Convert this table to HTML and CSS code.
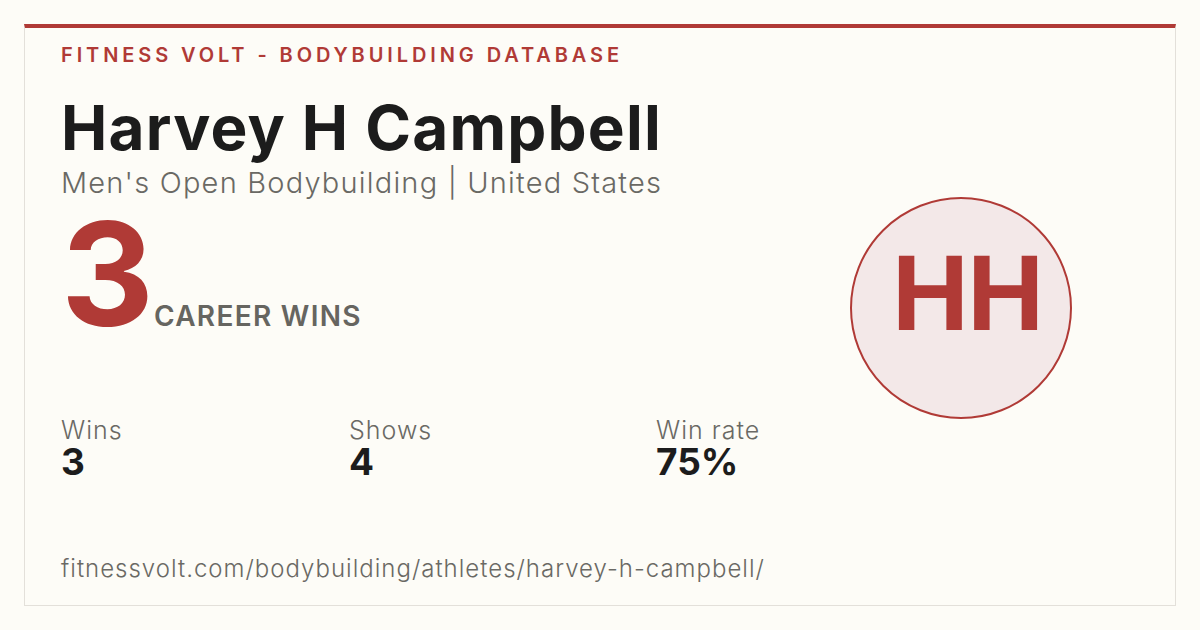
FILE: index.html
```html
<!DOCTYPE html>
<html lang="en">
<head>
<meta charset="utf-8">
<link rel="stylesheet" href="styles.css">
</head>
<body>
<div class="card">
  <div class="main">
    <div class="eyebrow">FITNESS VOLT - BODYBUILDING DATABASE</div>
    <h1 class="name">Harvey H Campbell</h1>
    <div class="sub">Men's Open Bodybuilding | United States</div>
    <div class="hero">
      <span class="hero-num">3</span>
      <span class="hero-label">CAREER WINS</span>
    </div>
    <div class="stats">
      <div class="stat"><div class="stat-label">Wins</div><div class="stat-value">3</div></div>
      <div class="stat"><div class="stat-label">Shows</div><div class="stat-value">4</div></div>
      <div class="stat"><div class="stat-label">Win rate</div><div class="stat-value">75%</div></div>
    </div>
    <div class="url">fitnessvolt.com/bodybuilding/athletes/harvey-h-campbell/</div>
  </div>
  <div class="aside">
    <div class="avatar">HH</div>
  </div>
</div>
</body>
</html>
```

FILE: styles.css
```css
html, body {
  margin: 0;
  padding: 0;
  background: #fdfcf7;
}
body {
  width: 1200px;
  height: 630px;
  overflow: hidden;
  font-family: Inter, "Liberation Sans", sans-serif;
}
.card {
  box-sizing: border-box;
  margin: 24px;
  width: 1152px;
  height: 582px;
  border: 1px solid #e3e0da;
  border-top: 4px solid #b03a36;
  background: #fdfcf7;
  padding: 0 36px;
  display: flex;
}
.main {
  flex: 1;
  display: flex;
  flex-direction: column;
}
.eyebrow {
  margin-top: 13px;
  font-size: 20px;
  line-height: 28px;
  font-weight: 600;
  letter-spacing: 3.9px;
  color: #b03a36;
}
.name {
  margin: 25px 0 0;
  font-size: 62px;
  line-height: 68px;
  font-weight: 700;
  color: #1c1c1c;
  letter-spacing: 1.2px;
}
.sub {
  margin-top: 4px;
  font-size: 29px;
  line-height: 34px;
  font-weight: 300;
  color: #6a6964;
  letter-spacing: 1.2px;
}
.hero {
  display: flex;
  align-items: baseline;
  gap: 0;
  margin-top: 8px;
}
.hero-num {
  font-size: 144px;
  line-height: 132px;
  font-weight: 700;
  color: #b03a36;
}
.hero-label {
  font-size: 28px;
  font-weight: 600;
  color: #666560;
  letter-spacing: 1.3px;
}
.stats {
  display: grid;
  grid-template-columns: 288px 307px auto;
  margin-top: 77px;
}
.stat-label {
  font-size: 25px;
  line-height: 26px;
  font-weight: 300;
  color: #6a6964;
  letter-spacing: 1px;
}
.stat-value {
  font-size: 37px;
  line-height: 38px;
  font-weight: 700;
  color: #1c1c1c;
}
.url {
  margin-top: 74px;
  font-size: 24px;
  line-height: 28px;
  font-weight: 300;
  color: #6a6964;
  letter-spacing: 1px;
}
.aside {
  width: 220px;
  padding-right: 69px;
  padding-top: 169px;
}
.avatar {
  box-sizing: border-box;
  width: 222px;
  height: 222px;
  border-radius: 50%;
  border: 2px solid #b03a36;
  background: #f3e8e8;
  color: #b03a36;
  display: flex;
  align-items: center;
  justify-content: center;
  font-family: "Liberation Sans", Arial, sans-serif;
  font-size: 107px;
  font-weight: 700;
  letter-spacing: -2px;
  padding-bottom: 30px;
  padding-left: 12px;
}
```
